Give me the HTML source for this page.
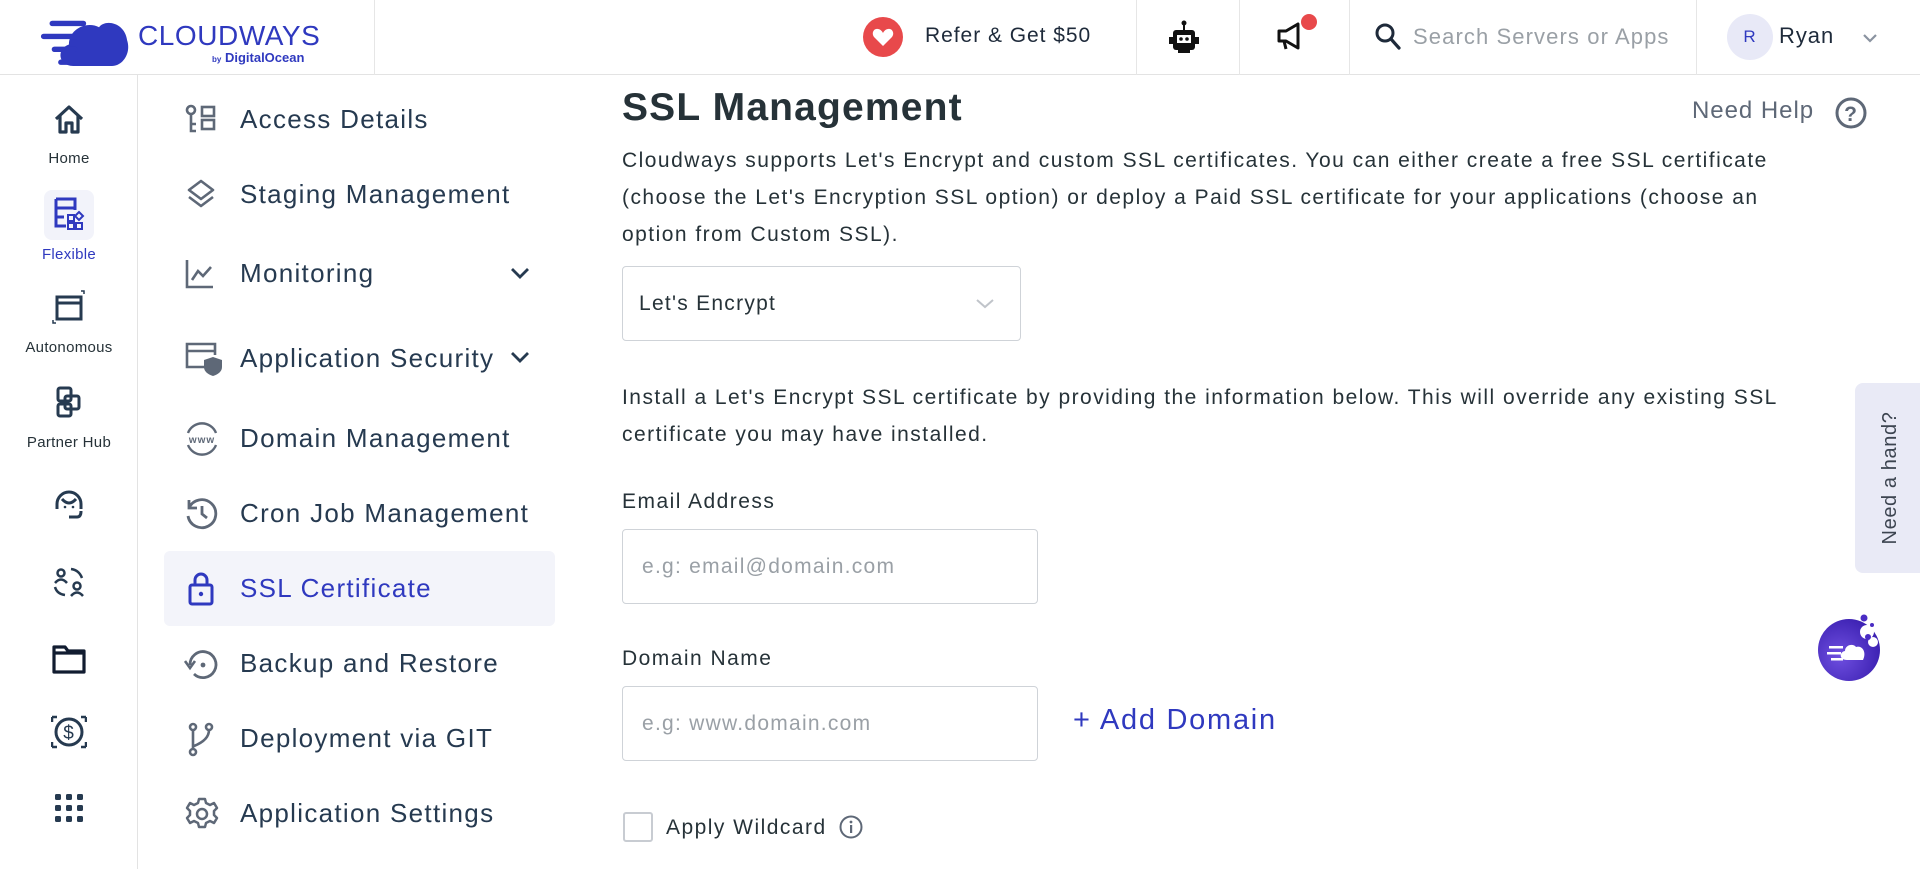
<!DOCTYPE html>
<html><head><meta charset="utf-8">
<style>
*{box-sizing:border-box;margin:0;padding:0}
body{width:1920px;height:869px;overflow:hidden;background:#fff;font-family:"Liberation Sans",sans-serif;color:#263238;position:relative;letter-spacing:0.06em}
.a{position:absolute;white-space:nowrap}
.hdr{left:0;top:0;width:1920px;height:75px;border-bottom:1px solid #e3e3e3}
.vl{position:absolute;top:0;height:75px;width:1px;background:#e6e6e6}
.rail{left:0;top:75px;width:138px;height:794px;border-right:1px solid #e3e3e3}
.rl{position:absolute;width:138px;text-align:center;font-size:15px;color:#263238;letter-spacing:0.02em}
.ri{position:absolute;left:51px}
.nav{position:absolute;left:240px;font-size:26px;color:#263a50;line-height:30px;letter-spacing:0.05em;white-space:nowrap}
.ni{position:absolute;left:184px}
.t{font-size:21px;color:#263238;line-height:37px;letter-spacing:0.07em}
.inp{position:absolute;border:1px solid #cfd3d8;border-radius:4px;background:#fff;font-size:21px;color:#9aa0a6;padding-left:19px;display:flex;align-items:center;letter-spacing:0.06em}
</style></head><body>
<div class="a hdr">
  <svg class="a" style="left:36px;top:10px" width="96" height="56" viewBox="0 0 84 52"><g fill="#2f39bf"><path d="M32 52 C18 52 16 36 28 32 C28 18 44 10 56 16 C62 8 80 12 82 28 C86 40 78 52 68 52Z"/><rect x="10" y="10" width="34" height="5" rx="2.5"/><rect x="2" y="22" width="36" height="5" rx="2.5"/><rect x="12" y="34" width="24" height="5" rx="2.5"/><rect x="18" y="46" width="20" height="5" rx="2.5"/></g></svg>
  <div class="a" style="left:138px;top:20px;font-size:28px;color:#2f39bf;letter-spacing:0.02em">CLOUDWAYS</div>
  <div class="a" style="left:212px;top:50px;font-size:13px;color:#2f39bf;font-weight:bold;letter-spacing:0"><span style="font-size:8px">by</span> DigitalOcean</div>
  <div class="vl" style="left:374px"></div>
  <svg class="a" style="left:862px;top:16px" width="42" height="42" viewBox="0 0 42 42"><circle cx="21" cy="21" r="20" fill="#e8494b"/><path d="M21 30 L12 21 C9 17 12 12 16 13 C18 13 20 15 21 17 C22 15 24 13 26 13 C30 12 33 17 30 21Z" fill="#fff"/></svg>
  <div class="a" style="left:925px;top:24px;font-size:21px;color:#1e2a3a">Refer &amp; Get $50</div>
  <div class="vl" style="left:1136px"></div>
  <svg class="a" style="left:1168px;top:20px" width="32" height="36" viewBox="0 0 32 36"><circle cx="16" cy="3" r="2.5" fill="#111"/><rect x="15" y="4" width="2" height="6" fill="#111"/><rect x="5" y="10" width="22" height="20" rx="3" fill="#111"/><rect x="1" y="17" width="4" height="7" fill="#111"/><rect x="27" y="17" width="4" height="7" fill="#111"/><rect x="9" y="15" width="14" height="8" fill="#fff"/><circle cx="13" cy="19" r="1.8" fill="#111"/><circle cx="19" cy="19" r="1.8" fill="#111"/><rect x="10" y="30" width="12" height="3" fill="#111"/></svg>
  <div class="vl" style="left:1239px"></div>
  <svg class="a" style="left:1275px;top:14px" width="44" height="40" viewBox="0 0 44 40"><path d="M4 17 h7 l12-7 v24 l-12-7 h-7z M9 27 l2 8" fill="none" stroke="#111" stroke-width="3" stroke-linejoin="round"/><circle cx="34" cy="8" r="8" fill="#e8494b"/></svg>
  <div class="vl" style="left:1349px"></div>
  <svg class="a" style="left:1374px;top:22px" width="28" height="30" viewBox="0 0 28 30"><circle cx="11" cy="11" r="8" fill="none" stroke="#1e2a3a" stroke-width="3"/><path d="M17 17 l8 9" stroke="#1e2a3a" stroke-width="3.2" stroke-linecap="round"/></svg>
  <div class="a" style="left:1413px;top:24px;font-size:22px;color:#9aa0a6;letter-spacing:0.05em">Search Servers or Apps</div>
  <div class="vl" style="left:1696px"></div>
  <div class="a" style="left:1727px;top:14px;width:46px;height:46px;border-radius:50%;background:#e8e9f7;color:#2f39bf;font-size:17px;text-align:center;line-height:46px">R</div>
  <div class="a" style="left:1779px;top:23px;font-size:22px;color:#1e2a3a">Ryan</div>
  <svg class="a" style="left:1862px;top:32px" width="16" height="12" viewBox="0 0 16 12"><path d="M2 3 l6 6 6-6" fill="none" stroke="#8a93a0" stroke-width="2.2"/></svg>
</div>

<div class="a rail">
  <svg class="ri" style="top:27px" width="36" height="36" viewBox="0 0 36 36"><path d="M5 17 L18 5 L31 17 M9 14 V30 H15 V21 H21 V30 H27 V14" fill="none" stroke="#263a50" stroke-width="3.2" stroke-linejoin="round"/></svg>
  <div class="rl" style="top:75px">Home</div>
  <div class="a" style="left:44px;top:115px;width:50px;height:50px;border-radius:8px;background:#f2f3fa"></div>
  <svg class="ri" style="top:121px;left:53px" width="32" height="36" viewBox="0 0 32 36"><path d="M3 3 H22 V14 M3 3 V30 H13 M3 12 H22 M3 21 H11" fill="none" stroke="#2f39bf" stroke-width="3"/><rect x="15" y="19" width="6" height="6" fill="none" stroke="#2f39bf" stroke-width="2"/><rect x="15" y="27" width="6" height="6" fill="none" stroke="#2f39bf" stroke-width="2"/><rect x="23" y="27" width="6" height="6" fill="none" stroke="#2f39bf" stroke-width="2"/><path d="M26 16 l4 4 -4 4 -4-4z" fill="none" stroke="#2f39bf" stroke-width="2"/></svg>
  <div class="rl" style="top:171px;color:#2f39bf">Flexible</div>
  <svg class="ri" style="top:214px" width="36" height="36" viewBox="0 0 36 36"><rect x="6" y="8" width="24" height="22" fill="none" stroke="#263a50" stroke-width="3"/><path d="M6 14 H30" stroke="#263a50" stroke-width="3"/><path d="M30 2 h3 v3 M2 31 v3 h3" fill="none" stroke="#263a50" stroke-width="1.5"/></svg>
  <div class="rl" style="top:264px">Autonomous</div>
  <svg class="ri" style="top:309px" width="36" height="36" viewBox="0 0 36 36"><rect x="7" y="4" width="13" height="13" rx="2" fill="none" stroke="#263a50" stroke-width="3"/><rect x="14" y="12" width="14" height="13" rx="2" fill="none" stroke="#263a50" stroke-width="3"/><rect x="7" y="20" width="13" height="12" rx="2" fill="none" stroke="#263a50" stroke-width="3"/></svg>
  <div class="rl" style="top:359px">Partner Hub</div>
  <svg class="ri" style="top:412px" width="36" height="36" viewBox="0 0 36 36"><path d="M6 22 V17 A12 12 0 0 1 30 17 V22 M11 12 Q18 20 25 12 M18 30 H26 Q30 30 30 24" fill="none" stroke="#263a50" stroke-width="3"/><circle cx="14" cy="20" r="1.3" fill="#263a50"/><circle cx="22" cy="20" r="1.3" fill="#263a50"/></svg>
  <svg class="ri" style="top:489px" width="36" height="36" viewBox="0 0 36 36"><circle cx="10" cy="9" r="3.5" fill="none" stroke="#263a50" stroke-width="2.5"/><path d="M4 19 Q10 12 16 19" fill="none" stroke="#263a50" stroke-width="2.5"/><circle cx="26" cy="22" r="3.5" fill="none" stroke="#263a50" stroke-width="2.5"/><path d="M20 32 Q26 25 32 32 M20 5 Q28 6 31 14 M4 23 Q6 30 14 31" fill="none" stroke="#263a50" stroke-width="2.5"/></svg>
  <svg class="ri" style="top:566px" width="36" height="36" viewBox="0 0 36 36"><path d="M3 6 H14 L17 10 H33 V31 H3Z M3 12 H33" fill="none" stroke="#111c30" stroke-width="3.2" stroke-linejoin="round"/></svg>
  <svg class="ri" style="top:638px" width="36" height="38" viewBox="0 0 36 38"><circle cx="18" cy="19" r="13" fill="none" stroke="#263a50" stroke-width="3"/><text x="18" y="26" font-size="19" text-anchor="middle" fill="#263a50" font-family="Liberation Sans">$</text><path d="M1 4 h5 M1 4 v5 M35 4 h-5 M35 4 v5 M1 34 h5 M1 34 v-5 M35 34 h-5 M35 34 v-5" stroke="#263a50" stroke-width="2.5"/></svg>
  <svg class="ri" style="top:715px" width="36" height="36" viewBox="0 0 36 36"><g fill="#263a50"><rect x="4" y="4" width="6" height="6" rx="1.5"/><rect x="15" y="4" width="6" height="6" rx="1.5"/><rect x="26" y="4" width="6" height="6" rx="1.5"/><rect x="4" y="15" width="6" height="6" rx="1.5"/><rect x="15" y="15" width="6" height="6" rx="1.5"/><rect x="26" y="15" width="6" height="6" rx="1.5"/><rect x="4" y="26" width="6" height="6" rx="1.5"/><rect x="15" y="26" width="6" height="6" rx="1.5"/><rect x="26" y="26" width="6" height="6" rx="1.5"/></g></svg>
</div>

<div class="a" style="left:164px;top:551px;width:391px;height:75px;border-radius:6px;background:#f3f4fa"></div>
<svg class="ni" style="top:104px" width="34" height="30" viewBox="0 0 34 30"><g fill="none" stroke="#5e6877" stroke-width="2.6"><circle cx="7" cy="6" r="4"/><path d="M7 10 V27 H12 M7 20 H12"/><rect x="18" y="3" width="12" height="9"/><rect x="18" y="16" width="12" height="9"/></g></svg>
<div class="nav" style="top:104px">Access Details</div>
<svg class="ni" style="top:178px" width="34" height="34" viewBox="0 0 34 34"><path d="M17 3 L29 12 17 21 5 12Z M5 19 L17 28 29 19" fill="none" stroke="#5e6877" stroke-width="2.6" stroke-linejoin="round"/></svg>
<div class="nav" style="top:179px">Staging Management</div>
<svg class="ni" style="top:258px" width="34" height="32" viewBox="0 0 34 32"><path d="M3 2 V29 H29 M8 22 L14 13 19 18 27 9" fill="none" stroke="#5e6877" stroke-width="2.6"/></svg>
<div class="nav" style="top:258px">Monitoring</div>
<svg class="a" style="left:509px;top:265px" width="22" height="16" viewBox="0 0 22 16"><path d="M3 4 l8 8 8-8" fill="none" stroke="#263a50" stroke-width="2.8"/></svg>
<svg class="ni" style="top:341px" width="40" height="36" viewBox="0 0 40 36"><path d="M24 26 H3 V3 H31 V14 M3 10 H31" fill="none" stroke="#5e6877" stroke-width="2.6"/><path d="M29 16 L38 19 V26 Q38 32 29 35 Q20 32 20 26 V19Z" fill="#5e6877"/></svg>
<div class="nav" style="top:343px">Application Security</div>
<svg class="a" style="left:509px;top:349px" width="22" height="16" viewBox="0 0 22 16"><path d="M3 4 l8 8 8-8" fill="none" stroke="#263a50" stroke-width="2.8"/></svg>
<svg class="ni" style="top:422px" width="36" height="34" viewBox="0 0 36 34"><path d="M4 11 A15 15 0 0 1 32 11 M4 23 A15 15 0 0 0 32 23" fill="none" stroke="#5e6877" stroke-width="2.4"/><text x="18" y="21" font-size="10" font-weight="bold" text-anchor="middle" fill="#5e6877" font-family="Liberation Sans">www</text></svg>
<div class="nav" style="top:423px">Domain Management</div>
<svg class="ni" style="top:496px" width="36" height="36" viewBox="0 0 36 36"><path d="M5 12 A14 14 0 1 1 4 20 M5 4 V12 H13 M18 10 V18 L23 22" fill="none" stroke="#5e6877" stroke-width="2.8"/></svg>
<div class="nav" style="top:498px">Cron Job Management</div>
<svg class="ni" style="top:571px" width="36" height="36" viewBox="0 0 36 36"><rect x="6" y="14" width="22" height="19" rx="2" fill="none" stroke="#2f39bf" stroke-width="3"/><path d="M11 14 V9 A6 6 0 0 1 23 9 V14" fill="none" stroke="#2f39bf" stroke-width="3"/><circle cx="17" cy="23" r="2.2" fill="#2f39bf"/></svg>
<div class="nav" style="top:573px;color:#2f39bf">SSL Certificate</div>
<svg class="ni" style="top:648px" width="36" height="34" viewBox="0 0 36 34"><path d="M6 17 A13 13 0 1 1 10 26" fill="none" stroke="#5e6877" stroke-width="2.8"/><path d="M1 13 L6 20 11 13" fill="none" stroke="#5e6877" stroke-width="2.6"/><circle cx="19" cy="17" r="2.4" fill="#5e6877"/></svg>
<div class="nav" style="top:648px">Backup and Restore</div>
<svg class="ni" style="top:722px" width="36" height="36" viewBox="0 0 36 36"><g fill="none" stroke="#5e6877" stroke-width="2.6"><circle cx="9" cy="5" r="3"/><circle cx="25" cy="5" r="3"/><circle cx="9" cy="30" r="3"/><path d="M9 8 V27 M25 8 Q25 18 10 24"/></g></svg>
<div class="nav" style="top:723px">Deployment via GIT</div>
<svg class="ni" style="top:796px" width="36" height="36" viewBox="0 0 36 36"><path d="M15 3 h6 l1 4 4 2 4-2 3 5 -3 3 v4 l3 3 -3 5 -4-2 -4 2 -1 4 h-6 l-1-4 -4-2 -4 2 -3-5 3-3 v-4 l-3-3 3-5 4 2 4-2z" fill="none" stroke="#5e6877" stroke-width="2.5" stroke-linejoin="round"/><circle cx="18" cy="18" r="5" fill="none" stroke="#5e6877" stroke-width="2.5"/></svg>
<div class="nav" style="top:798px">Application Settings</div>

<div class="a" style="left:622px;top:86px;font-size:39px;font-weight:bold;color:#263238;letter-spacing:0.03em">SSL Management</div>
<div class="a" style="left:1692px;top:97px;font-size:24px;color:#5e6877">Need Help</div>
<svg class="a" style="left:1834px;top:96px" width="34" height="34" viewBox="0 0 34 34"><circle cx="17" cy="17" r="14" fill="none" stroke="#5e6877" stroke-width="3"/><text x="17" y="25" font-size="21" font-weight="bold" text-anchor="middle" fill="#5e6877" font-family="Liberation Sans">?</text></svg>
<div class="a t" style="left:622px;top:142px">Cloudways supports Let's Encrypt and custom SSL certificates. You can either create a free SSL certificate<br>(choose the Let's Encryption SSL option) or deploy a Paid SSL certificate for your applications (choose an<br>option from Custom SSL).</div>
<div class="inp" style="left:622px;top:266px;width:399px;height:75px;color:#263238;padding-left:16px">Let's Encrypt</div>
<svg class="a" style="left:975px;top:298px" width="20" height="12" viewBox="0 0 20 12"><path d="M2 2 l8 7 8-7" fill="none" stroke="#c0c4ca" stroke-width="2"/></svg>
<div class="a t" style="left:622px;top:379px">Install a Let's Encrypt SSL certificate by providing the information below. This will override any existing SSL<br>certificate you may have installed.</div>
<div class="a t" style="left:622px;top:483px">Email Address</div>
<div class="inp" style="left:622px;top:529px;width:416px;height:75px">e.g: email@domain.com</div>
<div class="a t" style="left:622px;top:640px">Domain Name</div>
<div class="inp" style="left:622px;top:686px;width:416px;height:75px">e.g: www.domain.com</div>
<div class="a" style="left:1073px;top:704px;font-size:29px;color:#2f39bf;letter-spacing:0.06em">+ Add Domain</div>
<div class="a" style="left:623px;top:812px;width:30px;height:30px;border:2px solid #c8ccd2;border-radius:3px"></div>
<div class="a t" style="left:666px;top:809px">Apply Wildcard</div>
<svg class="a" style="left:838px;top:814px" width="26" height="26" viewBox="0 0 26 26"><circle cx="13" cy="13" r="10.5" fill="none" stroke="#5e6877" stroke-width="2"/><rect x="12" y="11" width="2.2" height="8" fill="#5e6877"/><circle cx="13" cy="8" r="1.4" fill="#5e6877"/></svg>

<div class="a" style="left:1855px;top:383px;width:70px;height:190px;border-radius:8px 0 0 8px;background:#e9eaf6"></div>
<div class="a" style="left:1795px;top:466px;width:190px;height:24px;transform:rotate(-90deg);font-size:20px;color:#3c4450;text-align:center;line-height:24px;letter-spacing:0.03em">Need a hand?</div>
<svg class="a" style="left:1815px;top:612px" width="70" height="70" viewBox="0 0 70 70"><defs><radialGradient id="g" cx="0.35" cy="0.6" r="0.7"><stop offset="0" stop-color="#6f4fe0"/><stop offset="1" stop-color="#3a1fb0"/></radialGradient></defs><circle cx="34" cy="38" r="31" fill="url(#g)"/><circle cx="52" cy="20" r="7" fill="#fff"/><circle cx="58" cy="30" r="5" fill="#fff"/><circle cx="49" cy="6" r="3.5" fill="#4a2cc4"/><circle cx="57" cy="13" r="2" fill="#4a2cc4"/><circle cx="53" cy="25" r="3" fill="#4a2cc4"/><path d="M32 48 C24 48 24 40 30 39 C30 33 38 31 41 35 C47 33 52 40 48 48Z" fill="#fff"/><g fill="#fff"><rect x="14" y="34" width="14" height="2.5"/><rect x="12" y="40" width="14" height="2.5"/><rect x="16" y="46" width="12" height="2.5"/></g></svg>
</body></html>
